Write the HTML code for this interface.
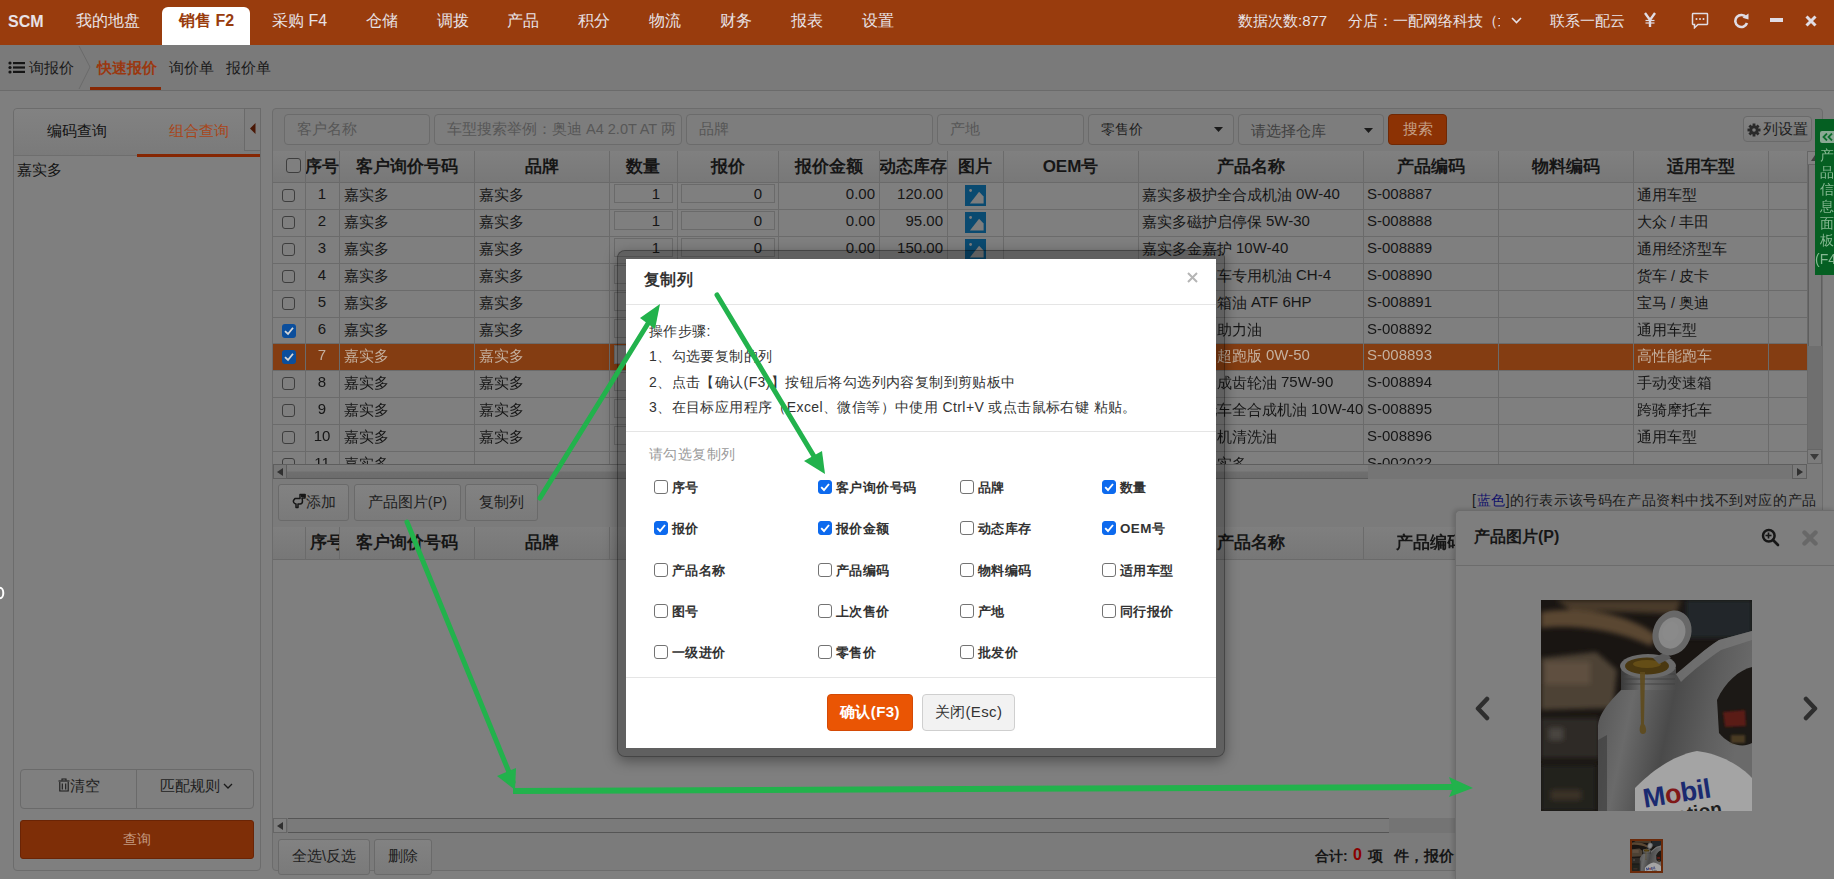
<!DOCTYPE html>
<html><head><meta charset="utf-8">
<style>
*{box-sizing:border-box;margin:0;padding:0}
html,body{width:1834px;height:879px;overflow:hidden}
body{position:relative;background:#7f7f7f;font-family:"Liberation Sans",sans-serif;font-size:14px;color:#1c1c1c}
.a{position:absolute}
#top{left:0;top:0;width:1834px;height:45px;background:#993c0d;color:#e8e2e6;font-size:16px}
#top .it{position:absolute;top:10px;line-height:22px;white-space:nowrap}
#top .tab{position:absolute;left:162px;top:7px;width:88px;height:38px;background:#fff;border-radius:6px 6px 0 0}

#sub{left:0;top:45px;width:1834px;height:46px;background:#7a7a7a;border-bottom:1px solid #6b6b6b;font-size:14px}
#sub .it{position:absolute;top:14px;line-height:18px;white-space:nowrap;color:#1a1a1a;font-size:14.5px}
.panel{position:absolute;background:#7f7f7f;border:1px solid #6c6c6c;border-radius:4px}
#left{left:13px;top:108px;width:248px;height:763px}
#lhead{position:absolute;left:0;top:0;width:246px;height:47px;background:linear-gradient(#828282,#7a7a7a);border-bottom:1px solid #6e6e6e;border-radius:4px 4px 0 0}
.btn{position:absolute;border:1px solid #6a6a6a;border-radius:3px;background:linear-gradient(#828282,#797979);color:#1e1e1e;text-align:center;white-space:nowrap}

#main{left:272px;top:108px;width:1551px;height:763px}
.inpt{position:absolute;top:114px;height:31px;border:1px solid #6b6b6b;border-radius:4px;background:#7d7d7d;color:#575757;font-size:14.5px;padding-left:12px;line-height:29px;white-space:nowrap;overflow:hidden}
.vl{width:1px;background:#6b6b6b}
.th{height:31px;line-height:31px;text-align:center;font-weight:bold;font-size:17px;color:#161616;white-space:nowrap;overflow:hidden}
.row{border-bottom:1px solid #6b6b6b;background:#7f7f7f}
.row.hl{background:#843d12}
.l{font-size:15px;position:relative;top:-1.5px}
.td{height:27px;line-height:24px;font-size:14.5px;white-space:nowrap;overflow:hidden;color:#161616}
.cb{border:1px solid #3e3e3e;border-radius:2px;background:#7f7f7f}
.cbk{width:14px;height:14px;border-radius:3px;background:#0b4e9c}
.cbk svg{position:absolute;left:0;top:0}
.inp{border:1px solid #6a6a6a;background:#7f7f7f;text-align:right;padding-right:12px;line-height:17px;color:#161616}

.sbar{position:absolute;background:#7a7a7a}
.bbtn{position:absolute;border:1px solid #6a6a6a;border-radius:3px;background:linear-gradient(#828282,#7a7a7a);color:#1e1e1e;text-align:center;white-space:nowrap;line-height:32px}

#pp{left:1455px;top:510px;width:380px;height:370px;background:#7f7f7f;border-left:1px solid #6c6c6c;border-top:1px solid #6c6c6c;border-radius:5px 0 0 0;box-shadow:-2px -1px 4px rgba(0,0,0,.15)}
#mframe{left:617px;top:250px;width:608px;height:507px;background:rgba(0,0,0,.24);border-radius:8px;border:1px solid rgba(0,0,0,.28);box-shadow:0 4px 14px rgba(0,0,0,.38)}
#modal{left:626px;top:259px;width:590px;height:489px;background:#fff;color:#333;font-size:14px;letter-spacing:.4px}
.mc{position:absolute;height:41px;line-height:20px;white-space:nowrap;font-weight:bold;font-size:13.4px;color:#333}
.mcb{position:absolute;width:14px;height:14px;border:1px solid #737373;border-radius:3px;background:#fff}
.mcb.on{background:#0d6aee;border-color:#0d6aee}
</style></head><body>
<div id="top" class="a">
  <div class="it" style="left:8px;top:11px;font-weight:bold;font-size:16px">SCM</div>
  <div class="it" style="left:76px">我的地盘</div>
  <div class="tab"></div>
  <div class="it" style="left:179px;color:#993c0d;font-weight:bold">销售 F2</div>
  <div class="it" style="left:272px">采购 F4</div>
  <div class="it" style="left:366px">仓储</div>
  <div class="it" style="left:437px">调拨</div>
  <div class="it" style="left:507px">产品</div>
  <div class="it" style="left:578px">积分</div>
  <div class="it" style="left:649px">物流</div>
  <div class="it" style="left:720px">财务</div>
  <div class="it" style="left:791px">报表</div>
  <div class="it" style="left:862px">设置</div>
  <div class="it" style="left:1238px;font-size:15px">数据次数:877</div>
  <div class="it" style="left:1348px;font-size:15px;width:152px;overflow:hidden">分店：一配网络科技（北京</div>
  <svg class="a" style="left:1511px;top:17px" width="11" height="7" viewBox="0 0 11 7"><polyline points="1,1 5.5,5.5 10,1" fill="none" stroke="#e6e0e6" stroke-width="1.6"/></svg>
  <svg class="a" style="left:1644px;top:12px" width="12" height="15" viewBox="0 0 12 15"><g stroke="#e0dce4" stroke-width="2.4" fill="none"><polyline points="1,1 6,8 11,1"/><line x1="6" y1="7" x2="6" y2="15"/></g><g stroke="#e0dce4" stroke-width="1.2"><line x1="1.5" y1="8.5" x2="10.5" y2="8.5"/><line x1="1.5" y1="11" x2="10.5" y2="11"/></g></svg>
  <svg class="a" style="left:1691px;top:12px" width="18" height="17" viewBox="0 0 18 17"><path d="M2,1.5 H16 A0.8,0.8 0 0 1 16.5,2.2 V12 A0.8,0.8 0 0 1 16,12.5 H7 L3.5,15.8 V12.5 H2 A0.8,0.8 0 0 1 1.5,12 V2.2 A0.8,0.8 0 0 1 2,1.5 Z" fill="none" stroke="#e0dce4" stroke-width="1.5"/><circle cx="5.5" cy="7" r="1" fill="#e0dce4"/><circle cx="9" cy="7" r="1" fill="#e0dce4"/><circle cx="12.5" cy="7" r="1" fill="#e0dce4"/></svg>
  <svg class="a" style="left:1733px;top:12px" width="17" height="17" viewBox="0 0 17 17"><path d="M13.2,5.5 A6,6 0 1 0 14,11" fill="none" stroke="#e0dce4" stroke-width="2.6"/><polygon points="9.5,5.8 15.5,1.5 15.5,7.5" fill="#e0dce4"/></svg>
  <div class="a" style="left:1770px;top:18px;width:13px;height:4px;background:#e0dce4"></div>
  <svg class="a" style="left:1805px;top:15px" width="12" height="12" viewBox="0 0 12 12"><path d="M1.5,1.5 L10.5,10.5 M10.5,1.5 L1.5,10.5" stroke="#e0dce4" stroke-width="3"/></svg>
  <div class="it" style="left:1550px;font-size:15px">联系一配云</div>
</div>

<div id="sub" class="a">
  <svg class="a" style="left:8px;top:61px;position:fixed" width="17" height="13" viewBox="0 0 17 13"><g fill="#151515"><circle cx="2" cy="2" r="1.6"/><circle cx="2" cy="6.5" r="1.6"/><circle cx="2" cy="11" r="1.6"/><rect x="5" y="1" width="12" height="2.2"/><rect x="5" y="5.4" width="12" height="2.2"/><rect x="5" y="9.8" width="12" height="2.2"/></g></svg>
  <div class="it" style="left:29px">询报价</div>
  <svg class="a" style="left:78px;top:0" width="14" height="45"><polyline points="1,1 12,22 1,44" fill="none" stroke="#6a6a6a" stroke-width="1"/></svg>
  <div class="it" style="left:97px;color:#9a3810;font-weight:bold">快速报价</div>
  <div class="a" style="left:90px;top:42px;width:71px;height:3px;background:#882804"></div>
  <div class="it" style="left:169px">询价单</div>
  <div class="it" style="left:226px">报价单</div>
</div>
<div id="left" class="panel">
  <div id="lhead">
    <div class="a" style="left:33px;top:13px;font-size:14.5px;line-height:18px;color:#121212">编码查询</div>
    <div class="a" style="left:155px;top:13px;font-size:14.5px;line-height:18px;color:#a8461a">组合查询</div>
    <div class="a" style="left:230px;top:-1px;width:17px;height:43px;border:1px solid #6a6a6a;background:#7e7e7e"></div>
    <svg class="a" style="left:236px;top:14px" width="6" height="11"><polygon points="5.5,0 5.5,11 0,5.5" fill="#4a1806"/></svg>
    <div class="a" style="left:123px;top:45px;width:123px;height:3px;background:#862602"></div>
  </div>
  <div class="a" style="left:3px;top:52px;line-height:18px;color:#121212;font-size:14.5px">嘉实多</div>
  <div class="btn" style="left:6px;top:660px;width:234px;height:40px;line-height:37px;border-radius:4px;background:#7f7f7f"></div>
  <div class="a" style="left:122px;top:661px;width:1px;height:38px;background:#6a6a6a"></div>
  <svg class="a" style="left:44px;top:669px" width="12" height="14" viewBox="0 0 12 14"><g fill="none" stroke="#1a1a1a" stroke-width="1.1"><path d="M4,2.5 V1 H8 V2.5"/><line x1="0.5" y1="3" x2="11.5" y2="3"/><path d="M1.8,4 V13 H10.2 V4"/><line x1="4.3" y1="5.5" x2="4.3" y2="11.5"/><line x1="7.7" y1="5.5" x2="7.7" y2="11.5"/></g></svg><div class="a" style="left:56px;top:668px;line-height:18px;color:#1e1e1e;font-size:14.5px">清空</div>
  <div class="a" style="left:146px;top:668px;line-height:18px;color:#1e1e1e;font-size:14.5px">匹配规则</div><svg class="a" style="left:209px;top:674px" width="10" height="6" viewBox="0 0 10 6"><polyline points="1,1 5,5 9,1" fill="none" stroke="#1a1a1a" stroke-width="1.3"/></svg>
  <div class="a" style="left:6px;top:711px;width:234px;height:39px;background:#7e2e07;border:1px solid #6a2405;border-radius:3px;color:#c49a80;text-align:center;line-height:37px">查询</div>
</div>

<div id="main" class="panel" style="background:#7b7b7b"></div>
<div class="a" style="left:273px;top:560px;width:1182px;height:258px;background:#7f7f7f"></div>
<div class="inpt" style="left:284px;width:146px">客户名称</div>
<div class="inpt" style="left:434px;width:248px">车型搜索举例：奥迪 A4 2.0T AT 两</div>
<div class="inpt" style="left:686px;width:247px">品牌</div>
<div class="inpt" style="left:937px;width:147px">产地</div>
<div class="inpt" style="left:1088px;width:146px;color:#1e1e1e;font-size:14px">零售价<svg class="a" style="left:125px;top:12px" width="9" height="5"><polygon points="0,0 9,0 4.5,5" fill="#1a1a1a"/></svg></div>
<div class="inpt" style="left:1238px;width:146px;line-height:33px;color:#404040">请选择仓库<svg class="a" style="left:125px;top:13px" width="9" height="5"><polygon points="0,0 9,0 4.5,5" fill="#1a1a1a"/></svg></div>
<div class="a" style="left:1388px;top:114px;width:59px;height:31px;background:#8c3204;border:1px solid #702804;border-radius:4px;color:#c4a088;text-align:center;line-height:29px;font-size:14.5px">搜索</div>
<div class="btn" style="left:1743px;top:116px;width:69px;height:26px;line-height:24px;border-radius:4px;padding-left:16px;font-size:14.5px">列设置</div><svg class="a" style="left:1747px;top:123px" width="14" height="14" viewBox="0 0 14 14"><g fill="#2a2a2a"><circle cx="7" cy="7" r="4.6"/><rect x="5.6" y="0.5" width="2.8" height="13" /><rect x="0.5" y="5.6" width="13" height="2.8"/><rect x="5.6" y="0.5" width="2.8" height="13" transform="rotate(45 7 7)"/><rect x="5.6" y="0.5" width="2.8" height="13" transform="rotate(-45 7 7)"/></g><circle cx="7" cy="7" r="1.8" fill="#7c7c7c"/></svg>
<div class="a" style="left:0;top:0;width:1807px;height:464px;overflow:hidden">
<div class="a" style="left:273px;top:151px;width:1534px;height:32px;background:linear-gradient(#808080,#787878);border-bottom:1px solid #6a6a6a"></div>
<div class="a th" style="left:305px;top:151px;width:34px">序号</div>
<div class="a th" style="left:339px;top:151px;width:135px">客户询价号码</div>
<div class="a th" style="left:474px;top:151px;width:135px">品牌</div>
<div class="a th" style="left:609px;top:151px;width:68px">数量</div>
<div class="a th" style="left:677px;top:151px;width:101px">报价</div>
<div class="a th" style="left:778px;top:151px;width:101px">报价金额</div>
<div class="a th" style="left:879px;top:151px;width:68px">动态库存</div>
<div class="a th" style="left:947px;top:151px;width:56px">图片</div>
<div class="a th" style="left:1003px;top:151px;width:135px">OEM号</div>
<div class="a th" style="left:1138px;top:151px;width:225px">产品名称</div>
<div class="a th" style="left:1363px;top:151px;width:135px">产品编码</div>
<div class="a th" style="left:1498px;top:151px;width:135px">物料编码</div>
<div class="a th" style="left:1633px;top:151px;width:135px">适用车型</div>
<div class="a cb" style="left:286px;top:158px;width:15px;height:15px;border-radius:3px"></div>
<div class="a row" style="left:273px;top:183px;width:1534px;height:27px"></div>
<div class="a cb" style="left:282px;top:189px;width:13px;height:13px;border-radius:3px"></div>
<div class="a td" style="left:305px;top:183px;width:34px;text-align:center;"><span class="l">1</span></div>
<div class="a td" style="left:344px;top:183px;width:130px;text-align:left;">嘉实多</div>
<div class="a td" style="left:479px;top:183px;width:130px;text-align:left;">嘉实多</div>
<div class="a inp" style="left:614px;top:184px;width:59px;height:19px"><span class="l" style="top:-0.5px">1</span></div>
<div class="a inp" style="left:681px;top:184px;width:94px;height:19px"><span class="l" style="top:-0.5px">0</span></div>
<div class="a td" style="left:778px;top:183px;width:97px;text-align:right;"><span class="l">0.00</span></div>
<div class="a td" style="left:879px;top:183px;width:64px;text-align:right;"><span class="l">120.00</span></div>
<div class="a pic" style="left:965px;top:185px"><svg width="21" height="21" viewBox="0 0 21 21"><rect width="21" height="21" fill="#0a4a70"/><polygon points="4.9,18.4 14.1,6.8 18.6,11.6 18.6,18.4" fill="#7d7d7d"/><circle cx="5.6" cy="5.5" r="1.4" fill="#7d7d7d"/></svg></div>
<div class="a td" style="left:1142px;top:183px;width:221px;text-align:left;">嘉实多极护全合成机油 <span class="l">0W-40</span></div>
<div class="a td" style="left:1367px;top:183px;width:131px;text-align:left;"><span class="l">S-008887</span></div>
<div class="a td" style="left:1637px;top:183px;width:131px;text-align:left;">通用车型</div>
<div class="a row" style="left:273px;top:210px;width:1534px;height:27px"></div>
<div class="a cb" style="left:282px;top:216px;width:13px;height:13px;border-radius:3px"></div>
<div class="a td" style="left:305px;top:210px;width:34px;text-align:center;"><span class="l">2</span></div>
<div class="a td" style="left:344px;top:210px;width:130px;text-align:left;">嘉实多</div>
<div class="a td" style="left:479px;top:210px;width:130px;text-align:left;">嘉实多</div>
<div class="a inp" style="left:614px;top:211px;width:59px;height:19px"><span class="l" style="top:-0.5px">1</span></div>
<div class="a inp" style="left:681px;top:211px;width:94px;height:19px"><span class="l" style="top:-0.5px">0</span></div>
<div class="a td" style="left:778px;top:210px;width:97px;text-align:right;"><span class="l">0.00</span></div>
<div class="a td" style="left:879px;top:210px;width:64px;text-align:right;"><span class="l">95.00</span></div>
<div class="a pic" style="left:965px;top:212px"><svg width="21" height="21" viewBox="0 0 21 21"><rect width="21" height="21" fill="#0a4a70"/><polygon points="4.9,18.4 14.1,6.8 18.6,11.6 18.6,18.4" fill="#7d7d7d"/><circle cx="5.6" cy="5.5" r="1.4" fill="#7d7d7d"/></svg></div>
<div class="a td" style="left:1142px;top:210px;width:221px;text-align:left;">嘉实多磁护启停保 <span class="l">5W-30</span></div>
<div class="a td" style="left:1367px;top:210px;width:131px;text-align:left;"><span class="l">S-008888</span></div>
<div class="a td" style="left:1637px;top:210px;width:131px;text-align:left;">大众 / 丰田</div>
<div class="a row" style="left:273px;top:237px;width:1534px;height:27px"></div>
<div class="a cb" style="left:282px;top:243px;width:13px;height:13px;border-radius:3px"></div>
<div class="a td" style="left:305px;top:237px;width:34px;text-align:center;"><span class="l">3</span></div>
<div class="a td" style="left:344px;top:237px;width:130px;text-align:left;">嘉实多</div>
<div class="a td" style="left:479px;top:237px;width:130px;text-align:left;">嘉实多</div>
<div class="a inp" style="left:614px;top:238px;width:59px;height:19px"><span class="l" style="top:-0.5px">1</span></div>
<div class="a inp" style="left:681px;top:238px;width:94px;height:19px"><span class="l" style="top:-0.5px">0</span></div>
<div class="a td" style="left:778px;top:237px;width:97px;text-align:right;"><span class="l">0.00</span></div>
<div class="a td" style="left:879px;top:237px;width:64px;text-align:right;"><span class="l">150.00</span></div>
<div class="a pic" style="left:965px;top:239px"><svg width="21" height="21" viewBox="0 0 21 21"><rect width="21" height="21" fill="#0a4a70"/><polygon points="4.9,18.4 14.1,6.8 18.6,11.6 18.6,18.4" fill="#7d7d7d"/><circle cx="5.6" cy="5.5" r="1.4" fill="#7d7d7d"/></svg></div>
<div class="a td" style="left:1142px;top:237px;width:221px;text-align:left;">嘉实多金嘉护 <span class="l">10W-40</span></div>
<div class="a td" style="left:1367px;top:237px;width:131px;text-align:left;"><span class="l">S-008889</span></div>
<div class="a td" style="left:1637px;top:237px;width:131px;text-align:left;">通用经济型车</div>
<div class="a row" style="left:273px;top:264px;width:1534px;height:27px"></div>
<div class="a cb" style="left:282px;top:270px;width:13px;height:13px;border-radius:3px"></div>
<div class="a td" style="left:305px;top:264px;width:34px;text-align:center;"><span class="l">4</span></div>
<div class="a td" style="left:344px;top:264px;width:130px;text-align:left;">嘉实多</div>
<div class="a td" style="left:479px;top:264px;width:130px;text-align:left;">嘉实多</div>
<div class="a inp" style="left:614px;top:265px;width:59px;height:19px"><span class="l" style="top:-0.5px">1</span></div>
<div class="a inp" style="left:681px;top:265px;width:94px;height:19px"><span class="l" style="top:-0.5px">0</span></div>
<div class="a td" style="left:778px;top:264px;width:97px;text-align:right;"><span class="l">0.00</span></div>
<div class="a td" style="left:879px;top:264px;width:64px;text-align:right;"><span class="l">80.00</span></div>
<div class="a pic" style="left:965px;top:266px"><svg width="21" height="21" viewBox="0 0 21 21"><rect width="21" height="21" fill="#0a4a70"/><polygon points="4.9,18.4 14.1,6.8 18.6,11.6 18.6,18.4" fill="#7d7d7d"/><circle cx="5.6" cy="5.5" r="1.4" fill="#7d7d7d"/></svg></div>
<div class="a td" style="left:1142px;top:264px;width:221px;text-align:left;">嘉实多柴油车专用机油 <span class="l">CH-4</span></div>
<div class="a td" style="left:1367px;top:264px;width:131px;text-align:left;"><span class="l">S-008890</span></div>
<div class="a td" style="left:1637px;top:264px;width:131px;text-align:left;">货车 / 皮卡</div>
<div class="a row" style="left:273px;top:291px;width:1534px;height:27px"></div>
<div class="a cb" style="left:282px;top:297px;width:13px;height:13px;border-radius:3px"></div>
<div class="a td" style="left:305px;top:291px;width:34px;text-align:center;"><span class="l">5</span></div>
<div class="a td" style="left:344px;top:291px;width:130px;text-align:left;">嘉实多</div>
<div class="a td" style="left:479px;top:291px;width:130px;text-align:left;">嘉实多</div>
<div class="a inp" style="left:614px;top:292px;width:59px;height:19px"><span class="l" style="top:-0.5px">1</span></div>
<div class="a inp" style="left:681px;top:292px;width:94px;height:19px"><span class="l" style="top:-0.5px">0</span></div>
<div class="a td" style="left:778px;top:291px;width:97px;text-align:right;"><span class="l">0.00</span></div>
<div class="a td" style="left:879px;top:291px;width:64px;text-align:right;"><span class="l">60.00</span></div>
<div class="a pic" style="left:965px;top:293px"><svg width="21" height="21" viewBox="0 0 21 21"><rect width="21" height="21" fill="#0a4a70"/><polygon points="4.9,18.4 14.1,6.8 18.6,11.6 18.6,18.4" fill="#7d7d7d"/><circle cx="5.6" cy="5.5" r="1.4" fill="#7d7d7d"/></svg></div>
<div class="a td" style="left:1142px;top:291px;width:221px;text-align:left;">嘉实多变速箱油 <span class="l">ATF 6HP</span></div>
<div class="a td" style="left:1367px;top:291px;width:131px;text-align:left;"><span class="l">S-008891</span></div>
<div class="a td" style="left:1637px;top:291px;width:131px;text-align:left;">宝马 / 奥迪</div>
<div class="a row" style="left:273px;top:318px;width:1534px;height:26px"></div>
<div class="a cbk" style="left:282px;top:324px"><svg width="14" height="14" viewBox="0 0 14 14"><polyline points="3,7.2 6,10 11,3.8" fill="none" stroke="#d6d6d6" stroke-width="1.8"/></svg></div>
<div class="a td" style="left:305px;top:318px;width:34px;text-align:center;"><span class="l">6</span></div>
<div class="a td" style="left:344px;top:318px;width:130px;text-align:left;">嘉实多</div>
<div class="a td" style="left:479px;top:318px;width:130px;text-align:left;">嘉实多</div>
<div class="a inp" style="left:614px;top:319px;width:59px;height:19px"><span class="l" style="top:-0.5px">1</span></div>
<div class="a inp" style="left:681px;top:319px;width:94px;height:19px"><span class="l" style="top:-0.5px">0</span></div>
<div class="a td" style="left:778px;top:318px;width:97px;text-align:right;"><span class="l">0.00</span></div>
<div class="a td" style="left:879px;top:318px;width:64px;text-align:right;"><span class="l">200.00</span></div>
<div class="a pic" style="left:965px;top:320px"><svg width="21" height="21" viewBox="0 0 21 21"><rect width="21" height="21" fill="#0a4a70"/><polygon points="4.9,18.4 14.1,6.8 18.6,11.6 18.6,18.4" fill="#7d7d7d"/><circle cx="5.6" cy="5.5" r="1.4" fill="#7d7d7d"/></svg></div>
<div class="a td" style="left:1142px;top:318px;width:221px;text-align:left;">嘉实多转向助力油</div>
<div class="a td" style="left:1367px;top:318px;width:131px;text-align:left;"><span class="l">S-008892</span></div>
<div class="a td" style="left:1637px;top:318px;width:131px;text-align:left;">通用车型</div>
<div class="a row hl" style="left:273px;top:344px;width:1534px;height:27px"></div>
<div class="a cbk" style="left:282px;top:350px"><svg width="14" height="14" viewBox="0 0 14 14"><polyline points="3,7.2 6,10 11,3.8" fill="none" stroke="#d6d6d6" stroke-width="1.8"/></svg></div>
<div class="a td" style="left:305px;top:344px;width:34px;text-align:center;color:#c4b09f;"><span class="l">7</span></div>
<div class="a td" style="left:344px;top:344px;width:130px;text-align:left;color:#c4b09f;">嘉实多</div>
<div class="a td" style="left:479px;top:344px;width:130px;text-align:left;color:#c4b09f;">嘉实多</div>
<div class="a inp" style="left:614px;top:345px;width:59px;height:19px"><span class="l" style="top:-0.5px">1</span></div>
<div class="a inp" style="left:681px;top:345px;width:94px;height:19px"><span class="l" style="top:-0.5px">0</span></div>
<div class="a td" style="left:778px;top:344px;width:97px;text-align:right;color:#c4b09f;"><span class="l">0.00</span></div>
<div class="a td" style="left:879px;top:344px;width:64px;text-align:right;color:#c4b09f;"><span class="l">40.00</span></div>
<div class="a pic" style="left:965px;top:346px"><svg width="21" height="21" viewBox="0 0 21 21"><rect width="21" height="21" fill="#0a4a70"/><polygon points="4.9,18.4 14.1,6.8 18.6,11.6 18.6,18.4" fill="#7d7d7d"/><circle cx="5.6" cy="5.5" r="1.4" fill="#7d7d7d"/></svg></div>
<div class="a td" style="left:1142px;top:344px;width:221px;text-align:left;color:#c4b09f;">嘉实多极护超跑版 <span class="l">0W-50</span></div>
<div class="a td" style="left:1367px;top:344px;width:131px;text-align:left;color:#c4b09f;"><span class="l">S-008893</span></div>
<div class="a td" style="left:1637px;top:344px;width:131px;text-align:left;color:#c4b09f;">高性能跑车</div>
<div class="a row" style="left:273px;top:371px;width:1534px;height:27px"></div>
<div class="a cb" style="left:282px;top:377px;width:13px;height:13px;border-radius:3px"></div>
<div class="a td" style="left:305px;top:371px;width:34px;text-align:center;"><span class="l">8</span></div>
<div class="a td" style="left:344px;top:371px;width:130px;text-align:left;">嘉实多</div>
<div class="a td" style="left:479px;top:371px;width:130px;text-align:left;">嘉实多</div>
<div class="a inp" style="left:614px;top:372px;width:59px;height:19px"><span class="l" style="top:-0.5px">1</span></div>
<div class="a inp" style="left:681px;top:372px;width:94px;height:19px"><span class="l" style="top:-0.5px">0</span></div>
<div class="a td" style="left:778px;top:371px;width:97px;text-align:right;"><span class="l">0.00</span></div>
<div class="a td" style="left:879px;top:371px;width:64px;text-align:right;"><span class="l">70.00</span></div>
<div class="a pic" style="left:965px;top:373px"><svg width="21" height="21" viewBox="0 0 21 21"><rect width="21" height="21" fill="#0a4a70"/><polygon points="4.9,18.4 14.1,6.8 18.6,11.6 18.6,18.4" fill="#7d7d7d"/><circle cx="5.6" cy="5.5" r="1.4" fill="#7d7d7d"/></svg></div>
<div class="a td" style="left:1142px;top:371px;width:221px;text-align:left;">嘉实多全合成齿轮油 <span class="l">75W-90</span></div>
<div class="a td" style="left:1367px;top:371px;width:131px;text-align:left;"><span class="l">S-008894</span></div>
<div class="a td" style="left:1637px;top:371px;width:131px;text-align:left;">手动变速箱</div>
<div class="a row" style="left:273px;top:398px;width:1534px;height:27px"></div>
<div class="a cb" style="left:282px;top:404px;width:13px;height:13px;border-radius:3px"></div>
<div class="a td" style="left:305px;top:398px;width:34px;text-align:center;"><span class="l">9</span></div>
<div class="a td" style="left:344px;top:398px;width:130px;text-align:left;">嘉实多</div>
<div class="a td" style="left:479px;top:398px;width:130px;text-align:left;">嘉实多</div>
<div class="a inp" style="left:614px;top:399px;width:59px;height:19px"><span class="l" style="top:-0.5px">1</span></div>
<div class="a inp" style="left:681px;top:399px;width:94px;height:19px"><span class="l" style="top:-0.5px">0</span></div>
<div class="a td" style="left:778px;top:398px;width:97px;text-align:right;"><span class="l">0.00</span></div>
<div class="a td" style="left:879px;top:398px;width:64px;text-align:right;"><span class="l">90.00</span></div>
<div class="a pic" style="left:965px;top:400px"><svg width="21" height="21" viewBox="0 0 21 21"><rect width="21" height="21" fill="#0a4a70"/><polygon points="4.9,18.4 14.1,6.8 18.6,11.6 18.6,18.4" fill="#7d7d7d"/><circle cx="5.6" cy="5.5" r="1.4" fill="#7d7d7d"/></svg></div>
<div class="a td" style="left:1142px;top:398px;width:221px;text-align:left;">嘉实多摩托车全合成机油 <span class="l">10W-40</span></div>
<div class="a td" style="left:1367px;top:398px;width:131px;text-align:left;"><span class="l">S-008895</span></div>
<div class="a td" style="left:1637px;top:398px;width:131px;text-align:left;">跨骑摩托车</div>
<div class="a row" style="left:273px;top:425px;width:1534px;height:27px"></div>
<div class="a cb" style="left:282px;top:431px;width:13px;height:13px;border-radius:3px"></div>
<div class="a td" style="left:305px;top:425px;width:34px;text-align:center;"><span class="l">10</span></div>
<div class="a td" style="left:344px;top:425px;width:130px;text-align:left;">嘉实多</div>
<div class="a td" style="left:479px;top:425px;width:130px;text-align:left;">嘉实多</div>
<div class="a inp" style="left:614px;top:426px;width:59px;height:19px"><span class="l" style="top:-0.5px">1</span></div>
<div class="a inp" style="left:681px;top:426px;width:94px;height:19px"><span class="l" style="top:-0.5px">0</span></div>
<div class="a td" style="left:778px;top:425px;width:97px;text-align:right;"><span class="l">0.00</span></div>
<div class="a td" style="left:879px;top:425px;width:64px;text-align:right;"><span class="l">110.00</span></div>
<div class="a pic" style="left:965px;top:427px"><svg width="21" height="21" viewBox="0 0 21 21"><rect width="21" height="21" fill="#0a4a70"/><polygon points="4.9,18.4 14.1,6.8 18.6,11.6 18.6,18.4" fill="#7d7d7d"/><circle cx="5.6" cy="5.5" r="1.4" fill="#7d7d7d"/></svg></div>
<div class="a td" style="left:1142px;top:425px;width:221px;text-align:left;">嘉实多发动机清洗油</div>
<div class="a td" style="left:1367px;top:425px;width:131px;text-align:left;"><span class="l">S-008896</span></div>
<div class="a td" style="left:1637px;top:425px;width:131px;text-align:left;">通用车型</div>
<div class="a row" style="left:273px;top:452px;width:1534px;height:27px"></div>
<div class="a cb" style="left:282px;top:458px;width:13px;height:13px;border-radius:3px"></div>
<div class="a td" style="left:305px;top:452px;width:34px;text-align:center;"><span class="l">11</span></div>
<div class="a td" style="left:344px;top:452px;width:130px;text-align:left;">嘉实多</div>
<div class="a td" style="left:1142px;top:452px;width:221px;text-align:left;">嘉实多测嘉实多</div>
<div class="a td" style="left:1367px;top:452px;width:131px;text-align:left;"><span class="l">S-002022</span></div>
<div class="a td" style="left:1637px;top:452px;width:131px;text-align:left;"></div>
<div class="a vl" style="left:305px;top:151px;height:313px"></div>
<div class="a vl" style="left:339px;top:151px;height:313px"></div>
<div class="a vl" style="left:474px;top:151px;height:313px"></div>
<div class="a vl" style="left:609px;top:151px;height:313px"></div>
<div class="a vl" style="left:677px;top:151px;height:313px"></div>
<div class="a vl" style="left:778px;top:151px;height:313px"></div>
<div class="a vl" style="left:879px;top:151px;height:313px"></div>
<div class="a vl" style="left:947px;top:151px;height:313px"></div>
<div class="a vl" style="left:1003px;top:151px;height:313px"></div>
<div class="a vl" style="left:1138px;top:151px;height:313px"></div>
<div class="a vl" style="left:1363px;top:151px;height:313px"></div>
<div class="a vl" style="left:1498px;top:151px;height:313px"></div>
<div class="a vl" style="left:1633px;top:151px;height:313px"></div>
<div class="a vl" style="left:1768px;top:151px;height:313px"></div>
</div>
<!-- vertical scrollbar -->
<div class="a" style="left:1807px;top:151px;width:15px;height:313px;background:#6f6f6f;border-left:1px solid #6a6a6a"></div>
<div class="a" style="left:1807px;top:151px;width:15px;height:14px;background:#828282;border:1px solid #666"></div>
<svg class="a" style="left:1811px;top:155px" width="8" height="6"><polygon points="4,0 8,6 0,6" fill="#404040"/></svg>
<div class="a" style="left:1808px;top:165px;width:14px;height:181px;background:#7a7a7a;border-left:1px solid #5e5e5e;border-right:1px solid #5e5e5e"></div>
<div class="a" style="left:1807px;top:449px;width:15px;height:15px;background:#7c7c7c;border:1px solid #666"></div>
<svg class="a" style="left:1810px;top:454px" width="9" height="6"><polygon points="0,0 9,0 4.5,6" fill="#3a3a3a"/></svg>
<!-- horizontal scrollbar -->
<div class="a" style="left:273px;top:464px;width:1534px;height:15px;background:#757575;border-top:1px solid #5e5e5e"></div>
<div class="a" style="left:287px;top:465px;width:1081px;height:14px;background:linear-gradient(#7d7d7d 0,#7b7b7b 45%,#6f6f6f 55%,#6c6c6c 100%);border-bottom:1px solid #5a5a5a"></div>
<div class="a" style="left:273px;top:465px;width:14px;height:14px;background:#777;border:1px solid #5e5e5e;border-top:0"></div>
<svg class="a" style="left:277px;top:468px" width="6" height="8"><polygon points="6,0 6,8 0,4" fill="#303030"/></svg>
<div class="a" style="left:1792px;top:464px;width:15px;height:15px;background:#7a7a7a;border:1px solid #5e5e5e"></div>
<svg class="a" style="left:1797px;top:468px" width="6" height="8"><polygon points="0,0 0,8 6,4" fill="#303030"/></svg>
<!-- buttons -->
<div class="bbtn" style="left:278px;top:484px;width:71px;height:37px;line-height:35px;padding-left:14px;font-size:14.5px">添加</div><svg class="a" style="left:292px;top:493px" width="15" height="16" viewBox="0 0 15 16"><path d="M8,1.5 H13 V5 H10 L10.5,8 C10.5,10 9,11 8,11 L6,11 V14.5 H4 V11 C2,10.5 1,9 1.5,7.5 L3,5.5 H8 Z" fill="none" stroke="#161616" stroke-width="1.5" stroke-linejoin="round"/><rect x="9" y="1" width="4.5" height="3" fill="#161616"/></svg>
<div class="bbtn" style="left:354px;top:484px;width:107px;height:37px;line-height:35px;font-size:14.5px">产品图片(P)</div>
<div class="bbtn" style="left:465px;top:484px;width:73px;height:37px;line-height:35px;font-size:14.5px">复制列</div>
<div class="a" style="left:1472px;top:491px;line-height:18px;white-space:nowrap;color:#1a1a1a;font-size:14px;letter-spacing:.6px">[<span style="color:#10106a">蓝色</span>]的行表示该号码在产品资料中找不到对应的产品</div>
<!-- second table header -->
<div class="a" style="left:273px;top:527px;width:1182px;height:33px;background:linear-gradient(#7f7f7f,#777777);border-bottom:1px solid #6a6a6a"></div>
<div class="a vl" style="left:305px;top:527px;height:33px"></div>
<div class="a vl" style="left:339px;top:527px;height:33px"></div>
<div class="a vl" style="left:474px;top:527px;height:33px"></div>
<div class="a vl" style="left:609px;top:527px;height:33px"></div>
<div class="a vl" style="left:1363px;top:527px;height:33px"></div>
<div class="a th" style="left:305px;top:527px;width:34px;text-align:left;padding-left:5px">序号</div>
<div class="a th" style="left:339px;top:527px;width:135px">客户询价号码</div>
<div class="a th" style="left:474px;top:527px;width:135px">品牌</div>
<div class="a th" style="left:1138px;top:527px;width:225px">产品名称</div>
<div class="a th" style="left:1363px;top:527px;width:135px;text-align:left;padding-left:33px">产品编码</div>
<!-- second h scrollbar -->
<div class="a" style="left:273px;top:818px;width:1182px;height:15px;background:#747474"></div>
<div class="a" style="left:288px;top:818px;width:1101px;height:15px;background:#7a7a7a;border-top:1px solid #555;border-bottom:1px solid #555"></div>
<div class="a" style="left:273px;top:818px;width:14px;height:15px;background:#808080;border:1px solid #666"></div>
<svg class="a" style="left:277px;top:822px" width="6" height="8"><polygon points="6,0 6,8 0,4" fill="#303030"/></svg>
<!-- bottom buttons -->
<div class="bbtn" style="left:278px;top:839px;width:92px;height:36px;font-size:14.5px">全选\反选</div>
<div class="bbtn" style="left:374px;top:839px;width:58px;height:36px;font-size:14.5px">删除</div>
<div class="a" style="left:1315px;top:847px;line-height:18px;font-weight:bold;white-space:nowrap;color:#161616;font-size:14px">合计:</div>
<div class="a" style="left:1353px;top:846px;line-height:18px;font-weight:bold;color:#8a0000;font-size:16px">0</div>
<div class="a" style="left:1368px;top:847px;line-height:18px;font-weight:bold;color:#161616;font-size:14.5px">项</div>
<div class="a" style="left:1394px;top:847px;line-height:18px;font-weight:bold;color:#161616;font-size:14.5px;white-space:nowrap">件，报价:</div>

<svg class="a" style="left:0;top:585px" width="6" height="16"><ellipse cx="0" cy="8" rx="3.3" ry="5.3" fill="none" stroke="#fff" stroke-width="2"/></svg>
<!-- product picture panel -->
<div id="pp" class="a">
  <div class="a" style="left:0;top:0;width:379px;height:55px;border-bottom:1px solid #6c6c6c;background:#7e7e7e;border-radius:5px 0 0 0"></div>
  <div class="a" style="left:18px;top:16px;font-size:16px;font-weight:bold;line-height:20px;color:#161616;white-space:nowrap">产品图片(P)</div>
  <svg class="a" style="left:305px;top:17px" width="19" height="19" viewBox="0 0 19 19"><circle cx="7.8" cy="7.8" r="5.8" fill="none" stroke="#161616" stroke-width="2.5"/><line x1="12" y1="12" x2="17" y2="17" stroke="#161616" stroke-width="2.6" stroke-linecap="round"/><line x1="4.5" y1="7.5" x2="10.5" y2="7.5" stroke="#161616" stroke-width="1.6"/><line x1="7.5" y1="4.5" x2="7.5" y2="10.5" stroke="#161616" stroke-width="1.6"/></svg>
  <svg class="a" style="left:346px;top:19px" width="16" height="16" viewBox="0 0 16 16"><path d="M2.5,2.5 L13.5,13.5 M13.5,2.5 L2.5,13.5" stroke="#686868" stroke-width="4.4" stroke-linecap="round"/></svg>
  <svg class="a" style="left:18px;top:185px" width="17" height="25" viewBox="0 0 17 25"><polyline points="13,3 4,12.5 13,22" fill="none" stroke="#2e2e2e" stroke-width="4.5" stroke-linecap="round" stroke-linejoin="round"/></svg>
  <svg class="a" style="left:346px;top:185px" width="17" height="25" viewBox="0 0 17 25"><polyline points="4,3 13,12.5 4,22" fill="none" stroke="#2e2e2e" stroke-width="4.5" stroke-linecap="round" stroke-linejoin="round"/></svg>
</div>
<svg width="0" height="0" style="position:absolute">
 <defs>
  <filter id="bl" x="-20%" y="-20%" width="140%" height="140%"><feGaussianBlur stdDeviation="2.5"/></filter>
  <filter id="bl2"><feGaussianBlur stdDeviation="0.8"/></filter>
  <linearGradient id="bod" x1="0" y1="0" x2="1" y2="0.25"><stop offset="0" stop-color="#333"/><stop offset=".12" stop-color="#5a5a5a"/><stop offset=".3" stop-color="#6a6a6a"/><stop offset=".55" stop-color="#4a4a4a"/><stop offset=".8" stop-color="#5e5e5e"/><stop offset="1" stop-color="#6a6a6a"/></linearGradient>
  <linearGradient id="neck" x1="0" y1="0" x2="1" y2="0"><stop offset="0" stop-color="#3a3a3a"/><stop offset=".4" stop-color="#6e6e6e"/><stop offset="1" stop-color="#4a4a4a"/></linearGradient>
  <symbol id="photo" viewBox="0 0 211 211">
  <rect width="211" height="211" fill="#191512"/>
  <g filter="url(#bl)">
    <path d="M0,12 C40,5 90,14 116,36 L110,46 C75,30 35,24 0,28 Z" fill="#5a4632"/>
    <path d="M15,0 L140,0 L135,14 L30,10 Z" fill="#4a3a2a"/>
    <path d="M0,58 L55,52 L76,70 L72,108 L0,110 Z" fill="#4e4236"/>
    <rect x="4" y="62" width="45" height="22" fill="#5e5040"/>
    <rect x="0" y="118" width="58" height="40" fill="#2e2a26"/>
    <rect x="8" y="128" width="14" height="12" fill="#4a4540"/>
    <rect x="145" y="0" width="66" height="38" fill="#23252a"/>
    <rect x="0" y="165" width="55" height="46" fill="#24211e"/>
    <rect x="10" y="190" width="30" height="10" fill="#3a3028"/>
  </g>
  <path d="M57,211 L57,128 C57,118 62,108 80,90 L135,90 L135,74 C150,62 165,48 178,40 L211,31 L211,211 Z" fill="url(#bod)"/>
  <path d="M135,74 C150,62 165,48 178,40 L211,31 L211,40 L180,50 C168,58 150,72 140,82 Z" fill="#7a7a7a" opacity=".7"/>
  <path d="M176,100 C184,82 198,70 211,67 L211,143 C200,149 186,143 178,133 Z" fill="#1c1916"/>
  <g filter="url(#bl2)"><path d="M182,112 L204,110 L205,126 L184,127 Z" fill="#5a1a12"/><rect x="190" y="135" width="14" height="8" fill="#4a3a20"/></g>
  <path d="M80,90 L80,68 L135,68 L135,90 Z" fill="url(#neck)"/>
  <g stroke="#3e3e3e" stroke-width="1" opacity=".8"><line x1="81" y1="74" x2="134" y2="74"/><line x1="81" y1="79" x2="134" y2="79"/><line x1="81" y1="84" x2="134" y2="84"/></g>
  <ellipse cx="107" cy="66" rx="28" ry="12" fill="#6a6a6a"/>
  <ellipse cx="106" cy="66" rx="22" ry="8.5" fill="#4a3810"/>
  <ellipse cx="106" cy="64" rx="14" ry="4" fill="#6a5218" opacity=".8"/>
  <path d="M99,72 L104,72 L103,124 C106,128 106,134 102,134 C98,134 98,128 100,124 Z" fill="#5e4a1c" opacity=".9"/>
  <path d="M112,58 L125,52 L130,58 L118,64 Z" fill="#5a5a5a"/>
  <ellipse cx="131" cy="33" rx="19" ry="23" fill="#686868" transform="rotate(22 131 33)"/>
  <ellipse cx="131" cy="33" rx="13" ry="16" fill="#888" transform="rotate(22 131 33)"/>
  <ellipse cx="129" cy="32" rx="8" ry="10" fill="#8a8a8a" transform="rotate(22 131 33)"/>
  <path d="M57,140 L57,211 L66,211 L66,135 Z" fill="#3a3a3a" opacity=".6"/>
  <path d="M94,211 L94,188 C110,172 130,156 156,151 C180,154 200,166 211,178 L211,211 Z" fill="#a4a4a4"/>
  <text x="101" y="203" font-family="Liberation Sans" font-weight="bold" font-size="27" fill="#1a2a70" transform="rotate(-9 132 190)" letter-spacing="-0.5">M<tspan fill="#801818">o</tspan>bil</text>
  <text x="98" y="222" font-family="Liberation Sans" font-weight="bold" font-size="19" fill="#1e1e1e" transform="rotate(-9 132 190)">Easation</text>
  </symbol>
 </defs>
</svg>
<svg class="a" style="left:1541px;top:600px" width="211" height="211"><use href="#photo"/></svg>
<div class="a" style="left:1630px;top:839px;width:33px;height:34px;border:2px solid #6a2a0a;overflow:hidden"><svg width="29" height="30" viewBox="0 0 211 211" preserveAspectRatio="none"><use href="#photo"/></svg></div>
<!-- green side tab -->
<div class="a" style="left:1815px;top:119px;width:19px;height:156px;background:#055f22"></div>
<div class="a" style="left:1820px;top:131px;width:14px;height:12px;background:#8aa994;border-radius:2px 0 0 2px"></div>
<svg class="a" style="left:1822px;top:133px" width="12" height="8" viewBox="0 0 12 8"><polyline points="5,0.5 1.5,4 5,7.5" fill="none" stroke="#0d6e2e" stroke-width="1.8"/><polyline points="10,0.5 6.5,4 10,7.5" fill="none" stroke="#0d6e2e" stroke-width="1.8"/></svg>
<div class="a" style="left:1820px;top:147px;width:15px;font-size:14px;line-height:17px;color:#86b892;word-break:break-all">产品信息面板</div>
<div class="a" style="left:1815px;top:251px;font-size:14px;line-height:17px;color:#86b892;white-space:nowrap">(F4</div>
<!-- modal -->
<div id="mframe" class="a"></div>
<div id="modal" class="a">
  <div class="a" style="left:18px;top:11px;font-size:15.5px;font-weight:bold;line-height:20px;color:#333">复制列</div>
  <svg class="a" style="left:561px;top:13px" width="11" height="11" viewBox="0 0 11 11"><path d="M1,1 L10,10 M10,1 L1,10" stroke="#b5b5b5" stroke-width="2"/></svg>
  <div class="a" style="left:0;top:45px;width:590px;height:1px;background:#e5e5e5"></div>
  <div class="a" style="left:23px;top:63px;line-height:18px;color:#333;white-space:nowrap">操作步骤:</div>
  <div class="a" style="left:23px;top:88px;line-height:18px;color:#333;white-space:nowrap">1、勾选要复制的列</div>
  <div class="a" style="left:23px;top:114px;line-height:18px;color:#333;white-space:nowrap">2、点击【确认(F3)】按钮后将勾选列内容复制到剪贴板中</div>
  <div class="a" style="left:23px;top:139px;line-height:18px;color:#333;white-space:nowrap">3、在目标应用程序（Excel、微信等）中使用 Ctrl+V 或点击鼠标右键 粘贴。</div>
  <div class="a" style="left:0;top:172px;width:590px;height:1px;background:#e5e5e5"></div>
  <div class="a" style="left:23px;top:186px;line-height:18px;color:#999;white-space:nowrap">请勾选复制列</div>
  <div class="mcb" style="left:28px;top:221px"></div><div class="mc" style="left:46px;top:219px">序号</div>
  <div class="mcb on" style="left:192px;top:221px"><svg class="a" style="left:0;top:0" width="12" height="12" viewBox="0 0 12 12"><polyline points="2.2,6.2 5,9 10,3" fill="none" stroke="#fff" stroke-width="1.9"/></svg></div><div class="mc" style="left:210px;top:219px">客户询价号码</div>
  <div class="mcb" style="left:334px;top:221px"></div><div class="mc" style="left:352px;top:219px">品牌</div>
  <div class="mcb on" style="left:476px;top:221px"><svg class="a" style="left:0;top:0" width="12" height="12" viewBox="0 0 12 12"><polyline points="2.2,6.2 5,9 10,3" fill="none" stroke="#fff" stroke-width="1.9"/></svg></div><div class="mc" style="left:494px;top:219px">数量</div>
  <div class="mcb on" style="left:28px;top:262px"><svg class="a" style="left:0;top:0" width="12" height="12" viewBox="0 0 12 12"><polyline points="2.2,6.2 5,9 10,3" fill="none" stroke="#fff" stroke-width="1.9"/></svg></div><div class="mc" style="left:46px;top:260px">报价</div>
  <div class="mcb on" style="left:192px;top:262px"><svg class="a" style="left:0;top:0" width="12" height="12" viewBox="0 0 12 12"><polyline points="2.2,6.2 5,9 10,3" fill="none" stroke="#fff" stroke-width="1.9"/></svg></div><div class="mc" style="left:210px;top:260px">报价金额</div>
  <div class="mcb" style="left:334px;top:262px"></div><div class="mc" style="left:352px;top:260px">动态库存</div>
  <div class="mcb on" style="left:476px;top:262px"><svg class="a" style="left:0;top:0" width="12" height="12" viewBox="0 0 12 12"><polyline points="2.2,6.2 5,9 10,3" fill="none" stroke="#fff" stroke-width="1.9"/></svg></div><div class="mc" style="left:494px;top:260px">OEM号</div>
  <div class="mcb" style="left:28px;top:304px"></div><div class="mc" style="left:46px;top:302px">产品名称</div>
  <div class="mcb" style="left:192px;top:304px"></div><div class="mc" style="left:210px;top:302px">产品编码</div>
  <div class="mcb" style="left:334px;top:304px"></div><div class="mc" style="left:352px;top:302px">物料编码</div>
  <div class="mcb" style="left:476px;top:304px"></div><div class="mc" style="left:494px;top:302px">适用车型</div>
  <div class="mcb" style="left:28px;top:345px"></div><div class="mc" style="left:46px;top:343px">图号</div>
  <div class="mcb" style="left:192px;top:345px"></div><div class="mc" style="left:210px;top:343px">上次售价</div>
  <div class="mcb" style="left:334px;top:345px"></div><div class="mc" style="left:352px;top:343px">产地</div>
  <div class="mcb" style="left:476px;top:345px"></div><div class="mc" style="left:494px;top:343px">同行报价</div>
  <div class="mcb" style="left:28px;top:386px"></div><div class="mc" style="left:46px;top:384px">一级进价</div>
  <div class="mcb" style="left:192px;top:386px"></div><div class="mc" style="left:210px;top:384px">零售价</div>
  <div class="mcb" style="left:334px;top:386px"></div><div class="mc" style="left:352px;top:384px">批发价</div>
  <div class="a" style="left:0;top:418px;width:590px;height:1px;background:#e5e5e5"></div>
  <div class="a" style="left:201px;top:435px;width:86px;height:37px;background:#ea5504;border:1px solid #d44a06;border-radius:4px;color:#fff;text-align:center;line-height:34px;font-size:15px;font-weight:bold">确认(F3)</div>
  <div class="a" style="left:296px;top:435px;width:93px;height:37px;background:#f2f2f2;border:1px solid #cfcfcf;border-radius:4px;color:#333;text-align:center;line-height:34px;font-size:15px">关闭(Esc)</div>
</div>
<!-- arrows -->
<svg class="a" style="left:0;top:0" width="1834" height="879">
  <g stroke="#22b24c" stroke-width="5" fill="none" stroke-linecap="round" stroke-linejoin="round">
    <line x1="540" y1="498" x2="652" y2="317"/>
    <line x1="717" y1="295" x2="815" y2="458"/>
    <polyline points="407,522 513,782"/>
    <polyline points="513,791 1455,787" stroke-width="6" stroke-linecap="butt"/>
  </g>
  <g fill="#22b24c">
    <polygon points="660,304 640,318 655,329"/>
    <polygon points="825,474 804,461 822,451"/>
    <polygon points="515,790 497,776 516,768"/>
    <polygon points="1473,788 1449,777 1453,788 1449,797"/>
  </g>
</svg>
</body></html>
